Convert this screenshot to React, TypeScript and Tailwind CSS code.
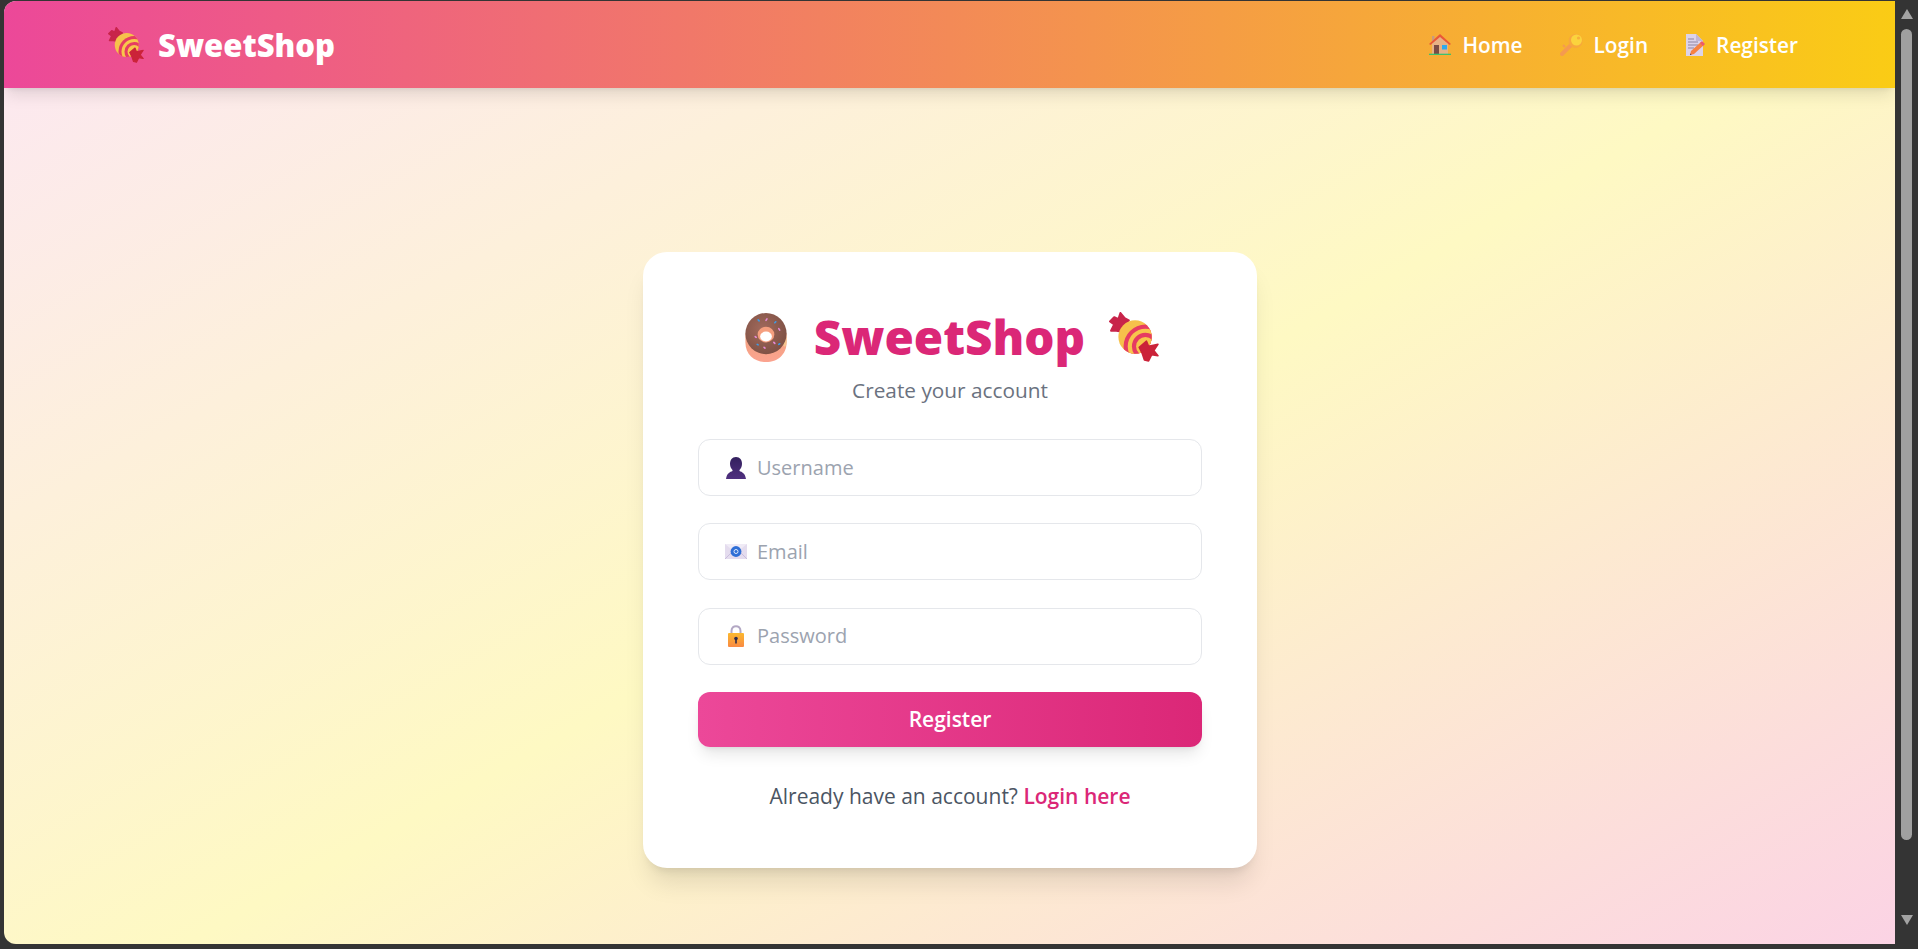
import type { ReactNode } from "react";

const font = "font-['Open_Sans','Noto_Sans',sans-serif]";

function Candy({ className, id }: { className: string; id: string }) {
  return (
    <svg viewBox="0 0 48 48" className={className}>
      <defs>
        <clipPath id={id}>
          <circle cx="25" cy="24" r="16" />
        </clipPath>
      </defs>
      <path
        d="M5 5 L9 7 L11 1 L15 6 L19 8 L13 19 L7 18 L2 18 L5 12 L1 9Z"
        fill="#c8244a"
        stroke="#c8244a"
        strokeLinejoin="round"
        strokeWidth="2"
      />
      <circle cx="25" cy="24" r="16" fill="#f6c14b" />
      <g clipPath={`url(#${id})`}>
        <circle cx="35" cy="33" r="21" fill="#e63c62" />
        <circle cx="35" cy="33" r="17" fill="#f8c64c" />
        <circle cx="35" cy="33" r="13" fill="#e63c62" />
        <circle cx="35" cy="33" r="9" fill="#f8c64c" />
      </g>
      <path
        d="M29 34 L36 28 L38 33 L47 31 L43 37 L47 42 L41 41 L38 47 L34 46 L32 40Z"
        fill="#cb2339"
        stroke="#cb2339"
        strokeLinejoin="round"
        strokeWidth="1.5"
      />
    </svg>
  );
}

function Donut({ className }: { className: string }) {
  return (
    <svg viewBox="0 0 42 50" className={className}>
      <defs>
        <linearGradient id="dough" x1="0" y1="0" x2="0" y2="1">
          <stop offset="0" stopColor="#f2a27f" />
          <stop offset="1" stopColor="#fba38f" />
        </linearGradient>
        <radialGradient id="icing" cx="0.42" cy="0.4" r="0.65">
          <stop offset="0" stopColor="#a26a5c" />
          <stop offset="1" stopColor="#7d5044" />
        </radialGradient>
      </defs>
      <path d="M0 21 V30 C0 43 10 50 21 50 C33 50 42 42 42 30 V21Z" fill="url(#dough)" />
      <path d="M38 32 C40 36 41 35 42 30 V24Z" fill="#f5c58f" />
      <circle cx="21" cy="21" r="21" fill="url(#icing)" />
      <ellipse cx="21" cy="22" rx="8.5" ry="8" fill="#f59f7f" />
      <ellipse cx="21" cy="24" rx="6" ry="5" fill="#ffffff" />
      <g strokeWidth="1.6" strokeLinecap="round">
        <path d="M13 7 l1 1" stroke="#3c9de8" />
        <path d="M22 6 l-1 1.5" stroke="#e78ad8" />
        <path d="M31 9 l-1 1" stroke="#3c9de8" />
        <path d="M34 16 l1 1.5" stroke="#e78ad8" />
        <path d="M10 24 l1 .8" stroke="#e78ad8" />
        <path d="M12 32 l1 .6" stroke="#3c9de8" />
        <path d="M19 35 l1 .8" stroke="#e78ad8" />
        <path d="M29 30 l1 1" stroke="#e78ad8" />
        <path d="M34 32 l1 -.6" stroke="#3c9de8" />
      </g>
    </svg>
  );
}

function House({ className }: { className: string }) {
  return (
    <svg viewBox="0 0 22 21" className={className}>
      <rect x="3" y="2" width="2.5" height="5" fill="#c99b7d" />
      <path d="M3 9 L11 2 L19 9 V20 H3Z" fill="#e8b184" />
      <path d="M0 10 L11 0 L22 10 L20.5 11 L11 3 L1.5 11Z" fill="#ea5838" />
      <rect x="5" y="11" width="5" height="9" fill="#7a4b45" />
      <rect x="13" y="11" width="5" height="4.5" fill="#2fa9ee" />
      <rect x="0" y="19.7" width="22" height="1.3" fill="#3cc26d" />
    </svg>
  );
}

function KeyIcon({ className }: { className: string }) {
  return (
    <svg viewBox="0 0 23 22" className={className}>
      <path d="M2 20 L12 10" stroke="#f59a4f" strokeWidth="4" strokeLinecap="round" />
      <path d="M5 13 L3 11" stroke="#f59a4f" strokeWidth="2" />
      <circle cx="15.5" cy="7" r="7" fill="#f7a73d" />
      <circle cx="16.5" cy="6" r="5.5" fill="#fbd33d" />
      <circle cx="18.5" cy="4" r="1.6" fill="#f7ae3a" />
    </svg>
  );
}

function Memo({ className }: { className: string }) {
  return (
    <svg viewBox="0 0 20 22" className={className}>
      <path d="M1 0 H11 L18 7 V22 H1Z" fill="#dcd3ea" />
      <path d="M11 0 L18 7 H11Z" fill="#c2b6d6" />
      <path d="M3 5 H9 M3 8 H13 M3 11 H13 M3 14 H9" stroke="#8f84a3" strokeWidth="1" />
      <path d="M5 21 L6 17 L16 8 L19 11 L9 20Z" fill="#f78241" />
      <path d="M15 9 L17 7 L20 10 L18 12Z" fill="#ec5a6c" />
      <path d="M5 21 L5.4 19.4 L6.6 20.5Z" fill="#3b3054" />
    </svg>
  );
}

function Bust({ className }: { className: string }) {
  return (
    <svg viewBox="0 0 20 22" className={className}>
      <defs>
        <linearGradient id="bust" x1="0" y1="0" x2="0" y2="1">
          <stop offset="0" stopColor="#33205e" />
          <stop offset="1" stopColor="#50307f" />
        </linearGradient>
      </defs>
      <path d="M10 0 C14 0 16 3 16 7 C16 10 14.5 12 13.5 13 V14 C16 15 19 16 20 22 H0 C1 16 4 15 6.5 14 V13 C5.5 12 4 10 4 7 C4 3 6 0 10 0Z" fill="url(#bust)" />
    </svg>
  );
}

function Envelope({ className }: { className: string }) {
  return (
    <svg viewBox="0 0 22 15" className={className}>
      <rect width="22" height="15" fill="#e4dcee" />
      <path d="M0 15 L8 7 M22 15 L14 7" stroke="#c9bddd" strokeWidth="1" />
      <path d="M0 0 L11 9 L22 0" fill="#f0ebf6" />
      <circle cx="11" cy="7.5" r="5.4" fill="#2f6fd6" />
      <circle cx="11" cy="7.5" r="2" fill="none" stroke="#dfe9fb" strokeWidth="1" />
    </svg>
  );
}

function Lock({ className }: { className: string }) {
  return (
    <svg viewBox="0 0 18 22" className={className}>
      <defs>
        <linearGradient id="lock" x1="0" y1="0" x2="0" y2="1">
          <stop offset="0" stopColor="#fbb82e" />
          <stop offset="1" stopColor="#f98a43" />
        </linearGradient>
      </defs>
      <path d="M4.5 9 V6 C4.5 -0.5 13.5 -0.5 13.5 6 V9" fill="none" stroke="#b3a8c4" strokeWidth="2" />
      <rect x="1" y="8" width="16" height="14" rx="1" fill="url(#lock)" />
      <circle cx="9" cy="13.5" r="1.8" fill="#2f2a4a" />
      <rect x="8.2" y="14" width="1.6" height="4.5" fill="#2f2a4a" />
    </svg>
  );
}

function NavLink({ icon, label }: { icon: ReactNode; label: string }) {
  return (
    <a className="flex items-center gap-[11px] text-[20.8px] leading-[28px] font-semibold text-white">
      {icon}
      <span>{label}</span>
    </a>
  );
}

function Field({ icon, placeholder, type }: { icon: ReactNode; placeholder: string; type: string }) {
  return (
    <div className="flex h-[57px] items-center rounded-xl border border-[#e5e7eb] bg-white pl-[26px]">
      <span className="flex w-[22px] justify-center">{icon}</span>
      <input
        type={type}
        placeholder={placeholder}
        className="ml-[10px] min-w-0 flex-1 bg-transparent text-[20px] text-[#374151] outline-none placeholder:text-[#9ca3af]"
      />
    </div>
  );
}

export default function App() {
  return (
    <div className={`flex h-[949px] w-[1918px] overflow-hidden bg-[#343434] ${font}`}>
      <div className="h-full w-[1895px] pt-px pb-[5px] pl-1">
        {/* the page is taller than the window, so the gradient runs past the fold */}
        <div className="h-full overflow-hidden rounded-l-xl">
          <div className="flex h-[1043px] flex-col bg-linear-to-br/srgb from-[#fce7f3] via-[#fef9c3] to-[#fbcfe8]">
            <nav className="z-10 flex h-[87px] shrink-0 items-center justify-between bg-linear-to-r/srgb from-[#ec4899] to-[#facc15] pr-[97px] pl-[104px] shadow-lg">
              <div className="flex items-center gap-[14px]">
                <Candy id="candy-nav" className="h-[36px] w-[36px]" />
                <span className="text-[31px] leading-9 font-extrabold text-white">SweetShop</span>
              </div>
              <div className="flex items-center gap-[37px]">
                <NavLink icon={<House className="h-[21px] w-[22px]" />} label="Home" />
                <NavLink icon={<KeyIcon className="h-[22px] w-[23px]" />} label="Login" />
                <NavLink icon={<Memo className="h-[22px] w-[20px]" />} label="Register" />
              </div>
            </nav>
            <main className="flex flex-1 justify-center pt-[164px] pl-px">
              <div className="h-[616px] w-[614px] rounded-3xl bg-white px-[55px] pt-[60px] shadow-xl">
                <div className="flex items-center justify-center pl-[4px]">
                  <Donut className="h-[49px] w-[42px]" />
                  <h1 className="mr-[24px] ml-[27px] text-[47.5px] leading-[50px] font-extrabold text-[#db2777]">SweetShop</h1>
                  <Candy id="candy-title" className="h-[50px] w-[50px]" />
                </div>
                <p className="mt-[14px] text-center text-[20.8px] leading-7 text-[#6b7280]">Create your account</p>
                <form className="mt-[35px] flex flex-col gap-[27.4px]">
                  <Field icon={<Bust className="h-[22px] w-[20px]" />} placeholder="Username" type="text" />
                  <Field icon={<Envelope className="h-[15px] w-[22px]" />} placeholder="Email" type="email" />
                  <Field icon={<Lock className="h-[22px] w-[18px]" />} placeholder="Password" type="password" />
                  <button
                    type="button"
                    className="h-[55px] rounded-xl bg-linear-to-r/srgb from-[#ec4899] to-[#db2777] text-[21px] font-semibold text-white shadow-lg"
                  >
                    Register
                  </button>
                </form>
                <p className="mt-[35px] text-center text-[21px] leading-7 text-[#4b5563]">
                  Already have an account? <a className="font-semibold text-[#db2777]">Login here</a>
                </p>
              </div>
            </main>
          </div>
        </div>
      </div>
      <div className="flex h-full w-[23px] flex-col items-center pt-[9px]">
        <div className="h-0 w-0 border-x-[6.5px] border-b-[10px] border-x-transparent border-b-[#a3a3a3]" />
        <div className="mt-[10px] h-[811px] w-[11px] rounded-full bg-[#a0a0a0]" />
        <div className="mt-[75px] h-0 w-0 border-x-[6.5px] border-t-[10px] border-x-transparent border-t-[#a3a3a3]" />
      </div>
    </div>
  );
}
